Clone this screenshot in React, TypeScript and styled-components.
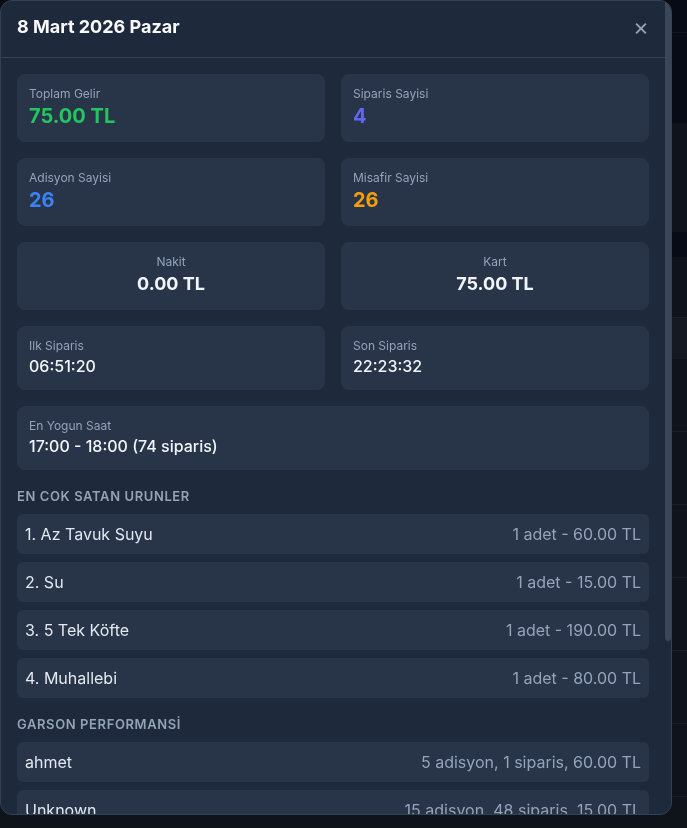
import styled, { createGlobalStyle } from 'styled-components';

const GlobalStyle = createGlobalStyle`
  html, body {
    margin: 0;
    padding: 0;
    background: #0f172a;
    font-family: Inter, "Noto Sans", sans-serif;
    overflow: hidden;
  }
  * {
    box-sizing: border-box;
  }
`;

type Stat = { label: string; value: string; color: string };

const STATS: Stat[] = [
  { label: 'Toplam Gelir', value: '75.00 TL', color: '#22c55e' },
  { label: 'Siparis Sayisi', value: '4', color: '#6366f1' },
  { label: 'Adisyon Sayisi', value: '26', color: '#3b82f6' },
  { label: 'Misafir Sayisi', value: '26', color: '#f59e0b' },
];

const PRODUCTS = [
  { name: '1. Az Tavuk Suyu', detail: '1 adet - 60.00 TL' },
  { name: '2. Su', detail: '1 adet - 15.00 TL' },
  { name: '3. 5 Tek Köfte', detail: '1 adet - 190.00 TL' },
  { name: '4. Muhallebi', detail: '1 adet - 80.00 TL' },
];

const WAITERS = [
  { name: 'ahmet', detail: '5 adisyon, 1 siparis, 60.00 TL' },
  { name: 'Unknown', detail: '15 adisyon, 48 siparis, 15.00 TL' },
];

const BG_ROWS = 7;
const THUMB_HEIGHT = 640;

export default function App() {
  return (
    <>
      <GlobalStyle />
      {/* sayfa arka plani (modal altinda kalan kisim) */}
      <Page>
        <TopBar />
        <PageBody>
          <SummaryCard />
          <TableCard>
            <TableTitle />
            <TableColumns />
            {Array.from({ length: BG_ROWS }).map((_, i) => (
              <TableRow key={i} />
            ))}
            <TableRow>
              <RowCell $color="#22c55e" $width={230}>16.500,00 TL</RowCell>
              <RowCell $color="#e5e7eb" $width={168}>52</RowCell>
              <RowCell $color="#e5e7eb" $width={162}>26</RowCell>
              <RowCell $color="#e5e7eb" $width={40}>26</RowCell>
            </TableRow>
          </TableCard>
        </PageBody>
      </Page>

      <Overlay>
        <Modal>
          <ScrollArea>
            <ModalHeader>
              <ModalTitle>8 Mart 2026 Pazar</ModalTitle>
              <CloseButton aria-label="Kapat">×</CloseButton>
            </ModalHeader>

            <ModalBody>
              <StatGrid>
                {STATS.map(s => (
                  <StatCard key={s.label}>
                    <StatLabel>{s.label}</StatLabel>
                    <StatValue color={s.color}>{s.value}</StatValue>
                  </StatCard>
                ))}
                <StatCard $center>
                  <StatLabel>Nakit</StatLabel>
                  <PayValue>0.00 TL</PayValue>
                </StatCard>
                <StatCard $center>
                  <StatLabel>Kart</StatLabel>
                  <PayValue>75.00 TL</PayValue>
                </StatCard>
                <StatCard>
                  <StatLabel>Ilk Siparis</StatLabel>
                  <TimeValue>06:51:20</TimeValue>
                </StatCard>
                <StatCard>
                  <StatLabel>Son Siparis</StatLabel>
                  <TimeValue>22:23:32</TimeValue>
                </StatCard>
                <StatCard $wide>
                  <StatLabel>En Yogun Saat</StatLabel>
                  <TimeValue>17:00 - 18:00 (74 siparis)</TimeValue>
                </StatCard>
              </StatGrid>

              <Section>
                <SectionTitle>EN COK SATAN URUNLER</SectionTitle>
                <List>
                  {PRODUCTS.map(p => (
                    <ListItem key={p.name}>
                      <ItemName>{p.name}</ItemName>
                      <ItemDetail>{p.detail}</ItemDetail>
                    </ListItem>
                  ))}
                </List>
              </Section>

              <Section>
                <SectionTitle>GARSON PERFORMANSİ</SectionTitle>
                <List>
                  {WAITERS.map(w => (
                    <ListItem key={w.name}>
                      <ItemName>{w.name}</ItemName>
                      <ItemDetail>{w.detail}</ItemDetail>
                    </ListItem>
                  ))}
                </List>
              </Section>
            </ModalBody>
          </ScrollArea>
          <ScrollTrack>
            <ScrollThumb style={{ height: THUMB_HEIGHT }} />
          </ScrollTrack>
        </Modal>
      </Overlay>
    </>
  );
}

/* ---------- arka plan sayfasi ---------- */

const Page = styled.div`
  min-height: 100vh;
  background: #0f172a;
`;

const TopBar = styled.div`
  height: 33px;
  border-bottom: 1px solid #283044;
`;

const PageBody = styled.div`
  display: flex;
  flex-direction: column;
  gap: 25px;
  padding: 90px 0 0 0;
`;

const SummaryCard = styled.div`
  height: 109px;
  background: #1f2937;
`;

const TableCard = styled.div`
  background: #1f2937;
`;

const TableTitle = styled.div`
  height: 61px;
  border-bottom: 1px solid #374151;
`;

const TableColumns = styled.div`
  height: 41px;
  background: #2a3441;
`;

const TableRow = styled.div`
  height: 73px;
  display: flex;
  align-items: center;
  padding-left: 38px;
  border-bottom: 1px solid #374151;
`;

const RowCell = styled.span<{ $color: string; $width: number }>`
  width: ${p => p.$width}px;
  flex-shrink: 0;
  color: ${p => p.$color};
  font-size: 16px;
  font-weight: 600;
`;

/* ---------- modal ---------- */

const Overlay = styled.div`
  position: fixed;
  inset: 0;
  background: rgba(0, 0, 0, 0.5);
  display: flex;
  align-items: flex-start;
  justify-content: flex-start;
`;

const Modal = styled.div`
  display: flex;
  width: 672px;
  height: 815px;
  background: #1e293b;
  border: 1px solid #334155;
  border-radius: 12px;
  overflow: hidden;
`;

const ScrollArea = styled.div`
  flex: 1;
  min-width: 0;
  overflow: hidden;
`;

const ScrollTrack = styled.div`
  width: 6px;
  flex-shrink: 0;
`;

const ScrollThumb = styled.div`
  width: 100%;
  background: #3b4759;
  border-radius: 0 0 3px 3px;
`;

const ModalHeader = styled.div`
  display: flex;
  align-items: center;
  justify-content: space-between;
  padding: 12px 16px 16px;
  border-bottom: 1px solid #334155;
`;

const ModalTitle = styled.h2`
  margin: 0;
  font-size: 18px;
  line-height: 28px;
  font-weight: 700;
  color: #f8fafc;
`;

const CloseButton = styled.button`
  background: none;
  border: none;
  padding: 0;
  color: #94a3b8;
  font-family: Inter, sans-serif;
  font-size: 24px;
  line-height: 28px;
  cursor: pointer;
`;

const ModalBody = styled.div`
  padding: 16px;
`;

const StatGrid = styled.div`
  display: grid;
  grid-template-columns: 1fr 1fr;
  gap: 16px;
`;

const StatCard = styled.div<{ $center?: boolean; $wide?: boolean }>`
  background: #283548;
  border-radius: 8px;
  padding: 12px;
  text-align: ${p => (p.$center ? 'center' : 'left')};
  grid-column: ${p => (p.$wide ? '1 / -1' : 'auto')};
`;

const StatLabel = styled.div`
  font-size: 12px;
  line-height: 16px;
  color: #94a3b8;
`;

const StatValue = styled.div<{ color: string }>`
  font-size: 20px;
  line-height: 28px;
  font-weight: 700;
  color: ${p => p.color};
`;

const PayValue = styled.div`
  font-size: 18px;
  line-height: 28px;
  font-weight: 700;
  color: #f1f5f9;
`;

const TimeValue = styled.div`
  font-size: 16px;
  line-height: 24px;
  font-weight: 500;
  color: #f1f5f9;
`;

const Section = styled.div`
  margin-top: 16px;
`;

const SectionTitle = styled.h3`
  margin: 0 0 8px;
  font-size: 13px;
  line-height: 20px;
  font-weight: 600;
  letter-spacing: 0.6px;
  color: #94a3b8;
`;

const List = styled.div`
  display: flex;
  flex-direction: column;
  gap: 8px;
`;

const ListItem = styled.div`
  display: flex;
  justify-content: space-between;
  align-items: center;
  padding: 8px;
  background: #283548;
  border-radius: 6px;
  font-size: 16px;
  line-height: 24px;
`;

const ItemName = styled.span`
  color: #e2e8f0;
`;

const ItemDetail = styled.span`
  color: #94a3b8;
`;
